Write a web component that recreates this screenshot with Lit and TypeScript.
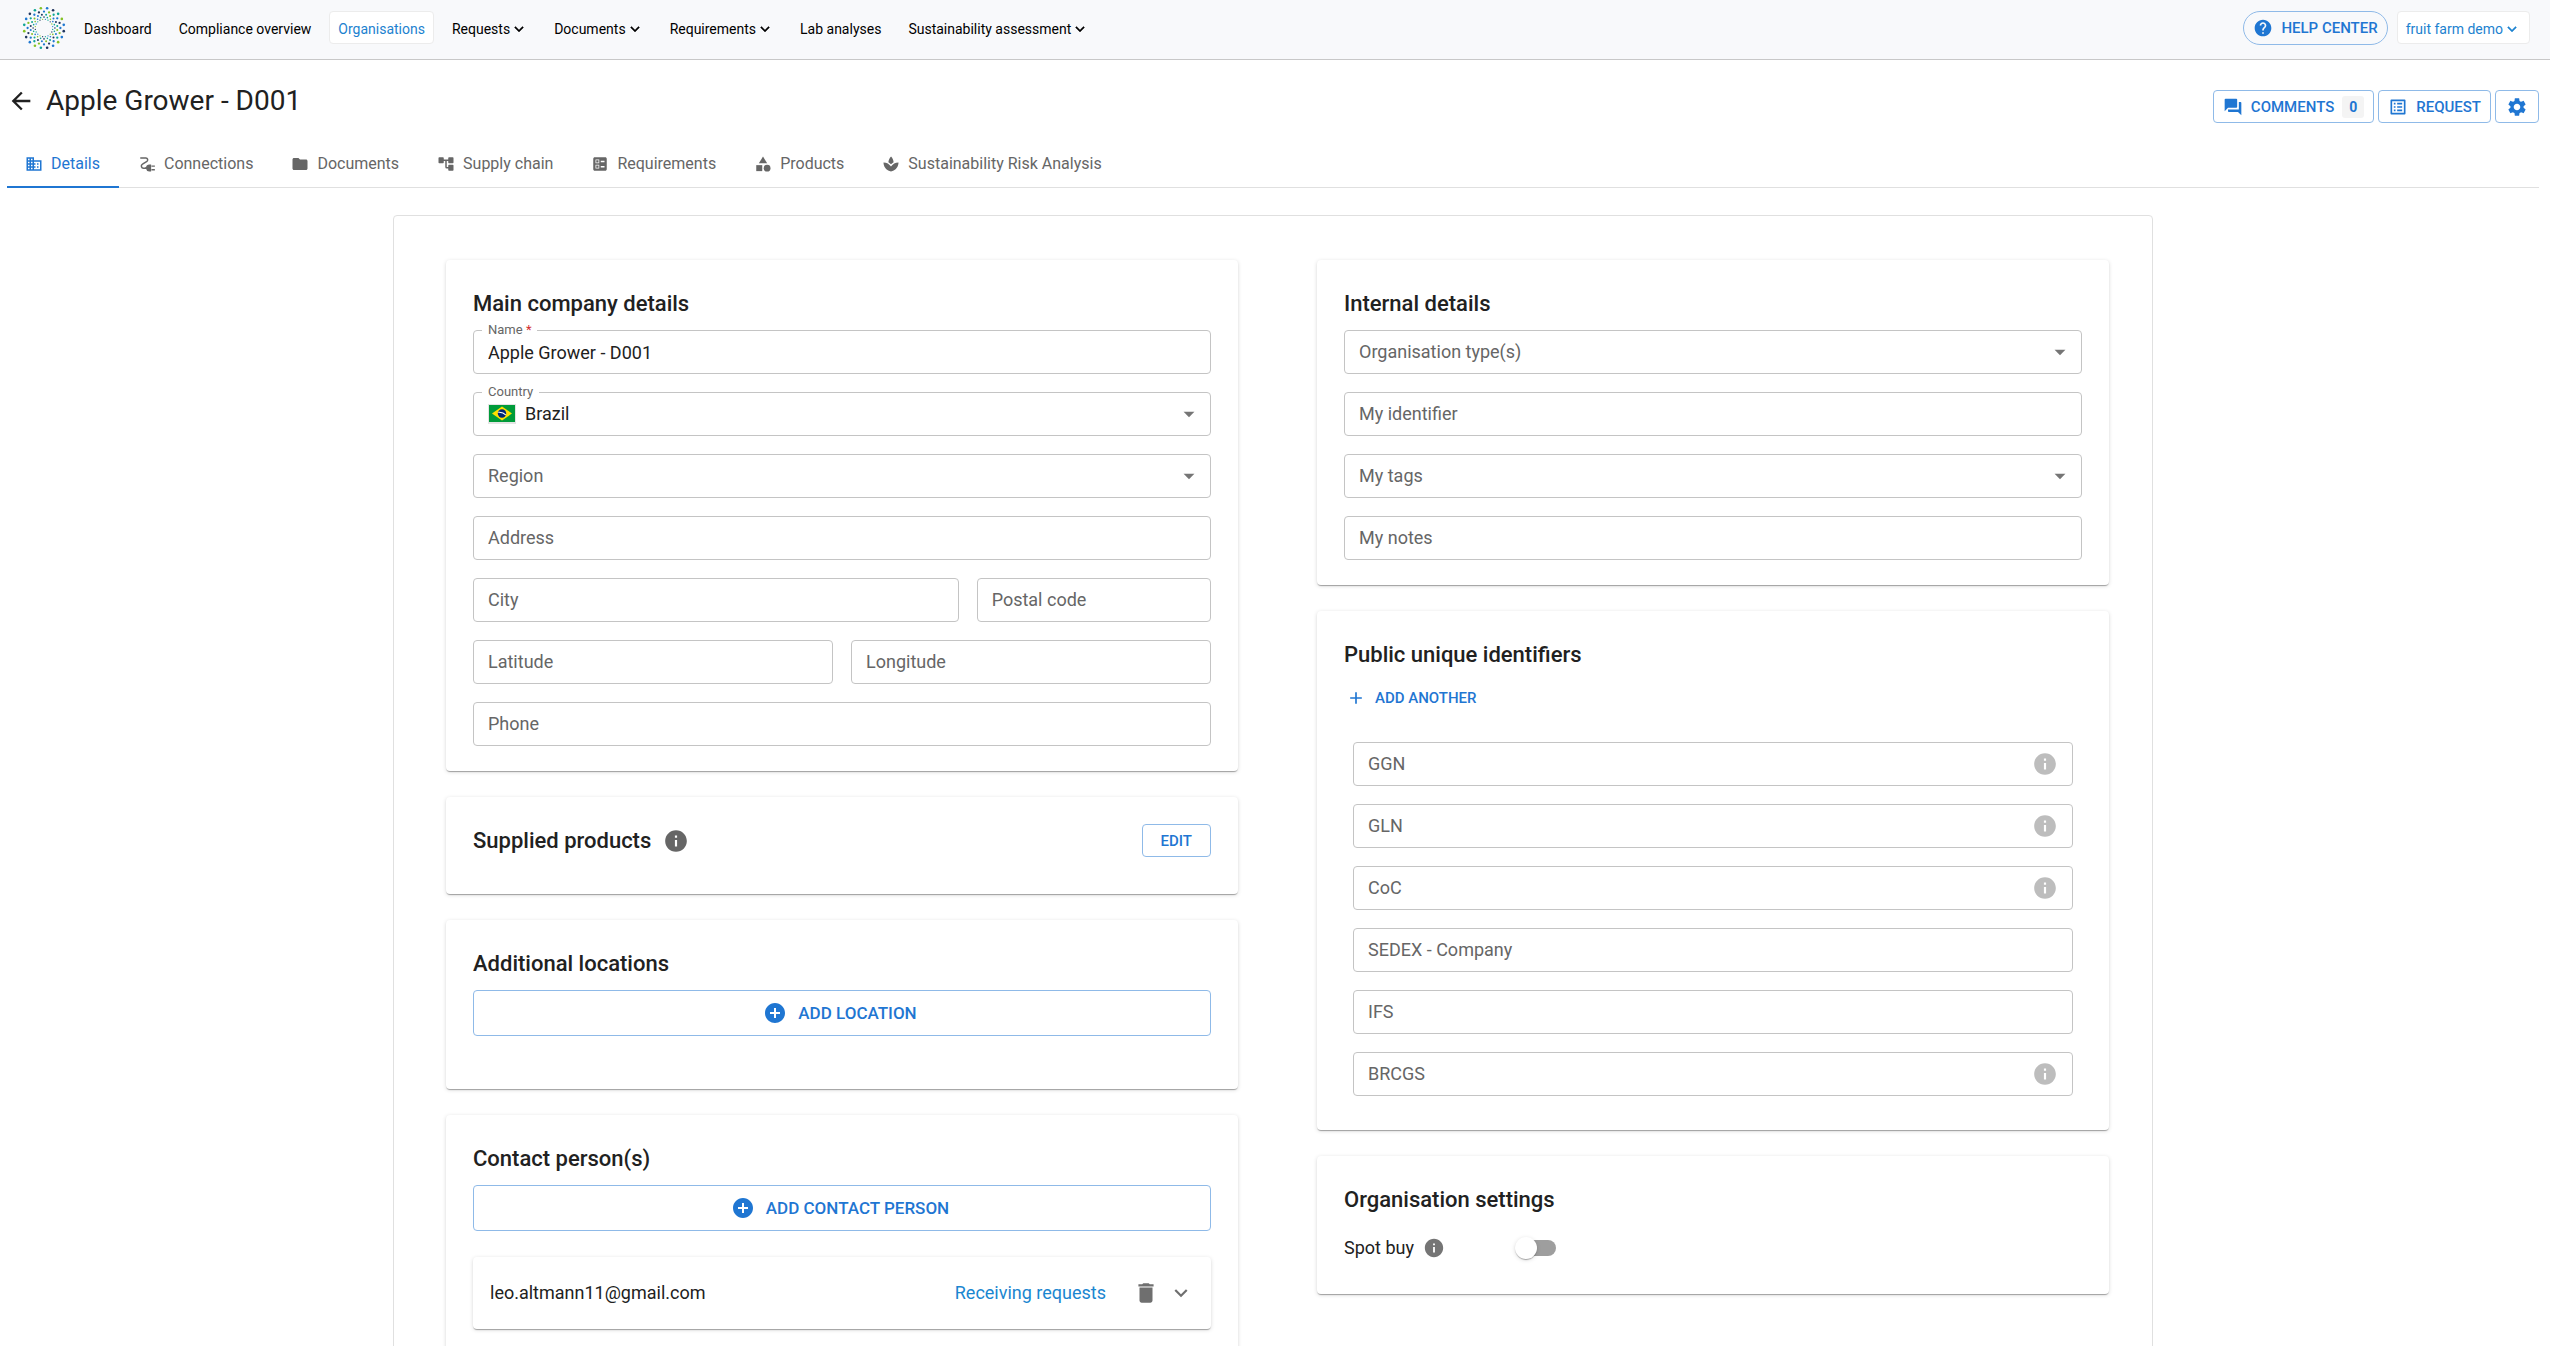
import { LitElement, html, svg, css, nothing } from "lit";
import type { TemplateResult, SVGTemplateResult } from "lit";
import { customElement } from "lit/decorators.js";
import { classMap } from "lit/directives/class-map.js";

const ICONS: Record<string, SVGTemplateResult> = {
  back: svg`<path d="M20 11H7.83l5.59-5.59L12 4l-8 8 8 8 1.41-1.41L7.83 13H20z"/>`,
  chevron: svg`<path d="M7.41 8.59 12 13.17l4.59-4.58L18 10l-6 6-6-6z"/>`,
  caret: svg`<path d="M7.41 8.59 12 13.17l4.59-4.58L18 10l-6 6-6-6z" stroke="currentColor" stroke-width=".5"/>`,
  help: svg`<path d="M12 2C6.48 2 2 6.48 2 12s4.48 10 10 10 10-4.48 10-10S17.52 2 12 2zm1 17h-2v-2h2v2zm2.07-7.75l-.9.92C13.45 12.9 13 13.5 13 15h-2v-.5c0-1.1.45-2.1 1.17-2.83l1.24-1.26c.37-.36.59-.86.59-1.41 0-1.1-.9-2-2-2s-2 .9-2 2H8c0-2.21 1.79-4 4-4s4 1.79 4 4c0 .88-.36 1.68-.93 2.25z"/>`,
  comments: svg`<path d="M21 6h-2v9H6v2c0 .55.45 1 1 1h11l4 4V7c0-.55-.45-1-1-1zm-4 6V3c0-.55-.45-1-1-1H3c-.55 0-1 .45-1 1v14l4-4h10c.55 0 1-.45 1-1z"/>`,
  list: svg`<path d="M19 5v14H5V5h14m1.1-2H3.9c-.5 0-.9.4-.9.9v16.2c0 .4.4.9.9.9h16.2c.4 0 .9-.5.9-.9V3.9c0-.5-.5-.9-.9-.9zM11 7h6v2h-6V7zm0 4h6v2h-6v-2zm0 4h6v2h-6zM7 7h2v2H7zm0 4h2v2H7zm0 4h2v2H7z"/>`,
  settings: svg`<path d="M19.14 12.94c.04-.3.06-.61.06-.94 0-.32-.02-.64-.07-.94l2.03-1.58c.18-.14.23-.41.12-.61l-1.92-3.32c-.12-.22-.37-.29-.59-.22l-2.39.96c-.5-.38-1.03-.7-1.62-.94l-.36-2.54c-.04-.24-.24-.41-.48-.41h-3.84c-.24 0-.43.17-.47.41l-.36 2.54c-.59.24-1.13.57-1.62.94l-2.39-.96c-.22-.08-.47 0-.59.22L2.74 8.87c-.12.21-.08.47.12.61l2.03 1.58c-.05.3-.09.63-.09.94s.02.64.07.94l-2.03 1.58c-.18.14-.23.41-.12.61l1.92 3.32c.12.22.37.29.59.22l2.39-.96c.5.38 1.03.7 1.62.94l.36 2.54c.05.24.24.41.48.41h3.84c.24 0 .44-.17.47-.41l.36-2.54c.59-.24 1.13-.56 1.62-.94l2.39.96c.22.08.47 0 .59-.22l1.92-3.32c.12-.22.07-.47-.12-.61l-2.01-1.58zM12 15.6c-1.98 0-3.6-1.62-3.6-3.6s1.62-3.6 3.6-3.6 3.6 1.62 3.6 3.6-1.62 3.6-3.6 3.6z"/>`,
  business: svg`<path d="M12 7V3H2v18h20V7H12zM6 19H4v-2h2v2zm0-4H4v-2h2v2zm0-4H4V9h2v2zm0-4H4V5h2v2zm4 12H8v-2h2v2zm0-4H8v-2h2v2zm0-4H8V9h2v2zm0-4H8V5h2v2zm10 12h-8v-2h2v-2h-2v-2h2v-2h-2V9h8v10zm-2-8h-2v2h2v-2zm0 4h-2v2h2v-2z"/>`,
  plug: svg`<path d="M3 4h7.500a2.500 2.500 0 0 1 1.400 4.500L6 12.200a3 3 0 0 0 1.800 5.600H11" fill="none" stroke="currentColor" stroke-width="2"/><path d="M17.500 12.500v9.500H15a4.500 4.500 0 0 1-4.300-3.700H9.500v-2.100h1.200A4.500 4.500 0 0 1 15 12.500zM18 14h4.500v1.800H18zM18 18.700h4.500v1.800H18z"/>`,
  folder: svg`<path d="M10 4H4c-1.100 0-1.990.9-1.990 2L2 18c0 1.100.9 2 2 2h16c1.100 0 2-.9 2-2V8c0-1.100-.9-2-2-2h-8l-2-2z"/>`,
  tree: svg`<path d="M3 3h5a1 1 0 0 1 1 1v2h6V4a1 1 0 0 1 1-1h5a1 1 0 0 1 1 1v6a1 1 0 0 1-1 1h-5a1 1 0 0 1-1-1V8h-2v8h2v-2a1 1 0 0 1 1-1h5a1 1 0 0 1 1 1v6a1 1 0 0 1-1 1h-5a1 1 0 0 1-1-1v-2h-2a2 2 0 0 1-2-2V8H9v2a1 1 0 0 1-1 1H3a1 1 0 0 1-1-1V4a1 1 0 0 1 1-1z"/>`,
  ballot: svg`<path d="M13 9.500h5v-2h-5v2zm0 7h5v-2h-5v2zm6 4.500H5c-1.100 0-2-.9-2-2V5c0-1.100.9-2 2-2h14c1.100 0 2 .9 2 2v14c0 1.100-.9 2-2 2zM6 11h5V6H6v5zm1-4h3v3H7V7zM6 18h5v-5H6v5zm1-4h3v3H7v-3z"/>`,
  category: svg`<path d="M12 2l-5.500 9h11z"/><circle cx="17.500" cy="17.500" r="4.500"/><path d="M3 13.500h8v8H3z"/>`,
  spa: svg`<path d="M15.490 9.630c-.18-2.790-1.310-5.510-3.430-7.630-2.140 2.140-3.320 4.860-3.550 7.630 1.280.68 2.460 1.560 3.490 2.630 1.030-1.060 2.210-1.940 3.490-2.630zM12 15.450C9.850 12.170 6.180 10 2 10c0 5.320 3.360 9.820 8.030 11.490.63.23 1.290.4 1.970.51.68-.12 1.330-.29 1.970-.51C18.640 19.820 22 15.320 22 10c-4.180 0-7.850 2.170-10 5.450z"/>`,
  info: svg`<path d="M12 2C6.48 2 2 6.48 2 12s4.480 10 10 10 10-4.480 10-10S17.520 2 12 2zm1 15h-2v-6h2v6zm0-8h-2V7h2v2z"/>`,
  addCircle: svg`<path d="M12 2C6.480 2 2 6.480 2 12s4.480 10 10 10 10-4.480 10-10S17.520 2 12 2zm5 11h-4v4h-2v-4H7v-2h4V7h2v4h4v2z"/>`,
  add: svg`<path d="M19 13h-6v6h-2v-6H5v-2h6V5h2v6h6v2z"/>`,
  trash: svg`<path d="M6 19c0 1.100.9 2 2 2h8c1.100 0 2-.9 2-2V7H6v12zM19 4h-3.500l-1-1h-5l-1 1H5v2h14V4z"/>`,
  dropdown: svg`<path d="M7 10l5 5 5-5z"/>`,
};

const icon = (name: string, size: string) =>
  html`<svg class="icon ${size}" viewBox="0 0 24 24" aria-hidden="true">${ICONS[name]}</svg>`;

const NAV = [
  { label: "Dashboard" },
  { label: "Compliance overview" },
  { label: "Organisations", active: true },
  { label: "Requests", menu: true },
  { label: "Documents", menu: true },
  { label: "Requirements", menu: true },
  { label: "Lab analyses" },
  { label: "Sustainability assessment", menu: true },
];

const TABS = [
  { label: "Details", icon: "business", active: true },
  { label: "Connections", icon: "plug" },
  { label: "Documents", icon: "folder" },
  { label: "Supply chain", icon: "tree" },
  { label: "Requirements", icon: "ballot" },
  { label: "Products", icon: "category" },
  { label: "Sustainability Risk Analysis", icon: "spa" },
];

interface Field {
  id: string;
  label: string;
  kind?: "text" | "select";
  value?: string;
  required?: boolean;
  flag?: boolean;
  info?: boolean;
}

const ADDRESS: Field[][] = [
  [{ id: "name", label: "Name", value: "Apple Grower - D001", required: true }],
  [{ id: "country", label: "Country", value: "Brazil", kind: "select", flag: true }],
  [{ id: "region", label: "Region", kind: "select" }],
  [{ id: "address", label: "Address" }],
  [{ id: "city", label: "City" }, { id: "postal", label: "Postal code" }],
  [{ id: "latitude", label: "Latitude" }, { id: "longitude", label: "Longitude" }],
  [{ id: "phone", label: "Phone" }],
];

const INTERNAL: Field[] = [
  { id: "types", label: "Organisation type(s)", kind: "select" },
  { id: "identifier", label: "My identifier" },
  { id: "tags", label: "My tags", kind: "select" },
  { id: "notes", label: "My notes" },
];

const IDENTIFIERS: Field[] = [
  { id: "ggn", label: "GGN", info: true },
  { id: "gln", label: "GLN", info: true },
  { id: "coc", label: "CoC", info: true },
  { id: "sedex", label: "SEDEX - Company" },
  { id: "ifs", label: "IFS" },
  { id: "brcgs", label: "BRCGS", info: true },
];

const G = "#84c225";
const B = "#1f78d1";
const N = "#20375f";
const T = "#0fa695";
const RINGS = [
  { r: 20, dot: 1.3, start: 9, colors: [B, N, T, G, B, N, B, G, B, N, T, G, B, N, G, T, B, N, T, G] },
  { r: 16.4, dot: 1.15, start: 0, colors: [B, G, T, B, N] },
  { r: 13.4, dot: 1, start: 9, colors: [T, G, B, N] },
  { r: 10.9, dot: 0.8, start: 0, colors: [N, T, G, B, T] },
  { r: 8.8, dot: 0.65, start: 9, colors: [B, T, N, G] },
];

const logo = () => html`<svg class="logo" viewBox="-22 -22 44 44" role="img" aria-label="Home">
  ${RINGS.map((ring) =>
    Array.from({ length: 20 }, (_, i) => {
      const a = ((ring.start + i * 18) * Math.PI) / 180;
      return svg`<circle cx=${(Math.sin(a) * ring.r).toFixed(2)} cy=${(-Math.cos(a) * ring.r).toFixed(2)}
        r=${ring.dot} fill=${ring.colors[i % ring.colors.length]} />`;
    })
  )}
</svg>`;

const flag = () => html`<svg class="flag" viewBox="0 0 28 20" aria-hidden="true">
  <rect width="28" height="20" fill="#e4e4e4" />
  <rect x="1" y="1" width="26" height="17" fill="#009b3a" />
  <path d="M14 2.500 24 9.500 14 16.500 4 9.500z" fill="#fedf00" />
  <circle cx="14" cy="9.500" r="4.200" fill="#002776" />
  <path d="M10.200 8.300c3-.4 5.600.5 7.500 2.600" fill="none" stroke="#fff" stroke-width="1.100" />
</svg>`;

@customElement("app-root")
export class AppRoot extends LitElement {
  static styles = css`
    :host {
      display: block;
      min-height: 100vh;
      background: #fff;
      color: #212121;
      font: 400 18px/26px Roboto, "Liberation Sans", sans-serif;
      --blue: #1f76d2;
      --blue-line: #8fbae8;
      --line: #e0e0e0;
      --field-line: #c4c4c4;
      --muted: #666;
      --lift: 0 2px 1px -1px rgba(0, 0, 0, 0.2), 0 1px 1px rgba(0, 0, 0, 0.14), 0 1px 4px rgba(0, 0, 0, 0.14);
    }
    * { box-sizing: border-box; }
    button, input, select { font: inherit; color: inherit; margin: 0; }
    button { cursor: pointer; background: none; border: 0; padding: 0; }
    a { color: inherit; text-decoration: none; }
    h1, h2 { margin: 0; }
    .icon { display: block; flex: none; fill: currentColor; }
    .s18 { width: 18px; height: 18px; }
    .s20 { width: 20px; height: 20px; }
    .s22 { width: 22px; height: 22px; }
    .s24 { width: 24px; height: 24px; }
    .s26 { width: 26px; height: 26px; }
    .s28 { width: 28px; height: 28px; }

    .bar {
      display: flex;
      align-items: center;
      justify-content: space-between;
      height: 60px;
      padding: 0 20px 4px 22px;
      background: #f8f9fb;
      border-bottom: 1px solid #c8c8c8;
    }
    .menu { display: flex; align-items: center; gap: 9px; }
    .logo { display: block; width: 44px; height: 44px; }
    .link {
      display: flex;
      align-items: center;
      height: 33px;
      padding: 2px 8px 0;
      border: 1px solid transparent;
      border-radius: 4px;
      color: #000;
      font-size: 14px;
      line-height: 20px;
      white-space: nowrap;
    }
    .menu button.link { padding-right: 7px; }
    .boxed { background: #fff; border-color: #ececec; color: #1c82cf; }
    .account { display: flex; align-items: center; gap: 9px; }
    .outlined {
      display: flex;
      align-items: center;
      justify-content: center;
      gap: 8px;
      height: 33px;
      padding: 0 9px;
      border: 1px solid var(--blue-line);
      border-radius: 4px;
      color: var(--blue);
      font-size: 15px;
      font-weight: 500;
      line-height: 24px;
      white-space: nowrap;
    }
    .pill { height: 34px; border-radius: 17px; }
    .gear { padding: 0 10px; }

    .page { padding: 0 11px 0 7px; }
    .heading {
      display: flex;
      align-items: flex-start;
      justify-content: space-between;
      padding-top: 24px;
    }
    .crumb { display: flex; align-items: center; gap: 11px; }
    .crumb h1 { font-size: 28px; font-weight: 400; line-height: 34px; }
    .back { display: block; color: #212121; }
    .actions { display: flex; gap: 4px; padding-top: 6px; }
    .count {
      min-width: 22px;
      height: 22px;
      border-radius: 3px;
      background: #f4f4f4;
      font-size: 14px;
      font-weight: 700;
      line-height: 22px;
      text-align: center;
    }
    .tabs { display: flex; margin-top: 17px; border-bottom: 1px solid var(--line); }
    .tab {
      display: flex;
      align-items: center;
      gap: 8px;
      height: 48px;
      margin-bottom: -1px;
      padding: 2px 19px 0;
      border-bottom: 2px solid transparent;
      color: var(--muted);
      font-size: 16px;
      line-height: 20px;
      white-space: nowrap;
    }
    .tab.on { padding-left: 18px; color: var(--blue); border-bottom-color: var(--blue); }

    .sheet {
      display: grid;
      grid-template-columns: minmax(0, 1fr) minmax(0, 1fr);
      gap: 79px;
      max-width: 1760px;
      margin: 27px auto 0;
      padding: 44px 43px 44px 52px;
      border: 1px solid var(--line);
      border-radius: 4px;
    }
    .column { display: flex; flex-direction: column; gap: 26px; }
    .card {
      padding: 29px 27px 25px;
      border-radius: 4px;
      background: #fff;
      box-shadow: var(--lift);
    }
    .card h2 { font-size: 22px; font-weight: 500; line-height: 30px; }
    .fields { display: grid; gap: 18px; padding-top: 11px; }
    .row { display: grid; gap: 18px; }
    .row.pair { grid-template-columns: 1fr 1fr; }
    .row.city { grid-template-columns: 487fr 235fr; }

    .field { display: grid; align-items: center; }
    .field > * { grid-area: 1 / 1; min-width: 0; }
    .control {
      width: 100%;
      height: 44px;
      padding: 0 14px;
      border: 1px solid var(--field-line);
      border-radius: 4px;
      background: transparent;
      appearance: none;
      outline: 0;
    }
    .control:focus { border-color: var(--blue); }
    .flagged .control { padding-left: 51px; }
    .hint { justify-self: start; padding-left: 15px; color: var(--muted); pointer-events: none; }
    .float {
      position: relative;
      justify-self: start;
      align-self: start;
      margin: -8px 0 0 9px;
      padding: 0 6px;
      background: #fff;
      color: var(--muted);
      font-size: 13px;
      line-height: 16px;
    }
    .star { color: #d32f2f; }
    .flag { width: 28px; height: 20px; margin-left: 15px; pointer-events: none; }
    .arrow { justify-self: end; margin-right: 9px; color: #757575; pointer-events: none; }
    .tip { justify-self: end; margin-right: 15px; color: #bdbdbd; }

    .supplied { display: flex; align-items: flex-start; justify-content: space-between; padding-top: 27px; padding-bottom: 36px; }
    .titled { display: flex; align-items: center; gap: 12px; color: var(--muted); }
    .titled h2 { color: #212121; line-height: 34px; }
    .edit { padding: 0 18px; }
    .wide {
      gap: 11px;
      width: 100%;
      height: 46px;
      margin-top: 11px;
      padding: 0 13px 0 9px;
      font-size: 17px;
    }
    .locations { padding-bottom: 53px; }
    .person {
      display: flex;
      align-items: center;
      height: 72px;
      margin-top: 26px;
      padding: 0 17px;
      border-radius: 4px;
      box-shadow: var(--lift);
    }
    .mail { flex: 1; }
    .receiving { color: #1a86d0; margin-right: 27px; }
    .tool { color: #6f6f6f; margin-right: 9px; }
    .tool:last-child { margin-right: 0; }
    .more {
      display: flex;
      align-items: center;
      gap: 9px;
      height: 33px;
      margin-top: 11px;
      padding: 0 2px;
      color: var(--blue);
      font-size: 15px;
      font-weight: 500;
    }
    .ids { padding: 28px 9px 9px; }
    .option { display: flex; align-items: center; gap: 9px; height: 54px; padding-top: 11px; color: #757575; }
    .option label { color: #212121; }
    .switch {
      appearance: none;
      display: grid;
      align-items: center;
      width: 41px;
      height: 22px;
      margin-left: 61px;
      cursor: pointer;
    }
    .switch::before, .switch::after { content: ""; grid-area: 1 / 1; }
    .switch::before { width: 37px; height: 16px; margin-left: 4px; border-radius: 8px; background: #9e9e9e; }
    .switch::after {
      width: 22px;
      height: 22px;
      border-radius: 50%;
      background: #fff;
      box-shadow: var(--lift);
    }
    .switch:checked::after { margin-left: 19px; background: var(--blue); }
  `;

  private field(f: Field): TemplateResult {
    const filled = !!f.value;
    return html`<div class=${classMap({ field: true, flagged: !!f.flag })}>
      ${f.kind === "select"
        ? html`<select class="control" id=${f.id}>
            <option>${f.value ?? ""}</option>
          </select>`
        : html`<input class="control" id=${f.id} type="text" .value=${f.value ?? ""} ?required=${f.required} />`}
      <label class=${filled ? "float" : "hint"} for=${f.id}
        >${f.label}${f.required ? html` <span class="star">*</span>` : nothing}</label
      >
      ${f.flag ? flag() : nothing}
      ${f.kind === "select" ? html`<svg class="icon s26 arrow" viewBox="0 0 24 24" aria-hidden="true">${ICONS.dropdown}</svg>` : nothing}
      ${f.info ? html`<button class="tip" type="button" aria-label="About ${f.label}">${icon("info", "s26")}</button>` : nothing}
    </div>`;
  }

  private bar() {
    return html`<header class="bar">
      <nav class="menu">
        <a class="home" href="#">${logo()}</a>
        ${NAV.map((n) =>
          n.menu
            ? html`<button class="link" type="button">${n.label}${icon("caret", "s18")}</button>`
            : html`<a class=${classMap({ link: true, boxed: !!n.active })} href="#">${n.label}</a>`
        )}
      </nav>
      <div class="account">
        <button class="outlined pill" type="button">${icon("help", "s20")}HELP CENTER</button>
        <button class="link boxed" type="button">fruit farm demo${icon("caret", "s18")}</button>
      </div>
    </header>`;
  }

  render() {
    return html`
      ${this.bar()}
      <main class="page">
        <div class="heading">
          <div class="crumb">
            <a class="back" href="#" aria-label="Back">${icon("back", "s28")}</a>
            <h1>Apple Grower - D001</h1>
          </div>
          <div class="actions">
            <button class="outlined" type="button">
              ${icon("comments", "s20")}COMMENTS<span class="count">0</span>
            </button>
            <button class="outlined" type="button">${icon("list", "s20")}REQUEST</button>
            <button class="outlined gear" type="button" aria-label="Settings">${icon("settings", "s22")}</button>
          </div>
        </div>
        <nav class="tabs">
          ${TABS.map(
            (t) => html`<a class=${classMap({ tab: true, on: !!t.active })} href="#">${icon(t.icon, "s18")}${t.label}</a>`
          )}
        </nav>
        <div class="sheet">
          <div class="column">
            <section class="card">
              <h2>Main company details</h2>
              <div class="fields">
                ${ADDRESS.map(
                  (row) => html`<div class=${classMap({ row: true, city: row[0].id === "city", pair: row[0].id === "latitude" })}>
                    ${row.map((f) => this.field(f))}
                  </div>`
                )}
              </div>
            </section>
            <section class="card supplied">
              <div class="titled"><h2>Supplied products</h2>${icon("info", "s26")}</div>
              <button class="outlined edit" type="button">EDIT</button>
            </section>
            <section class="card locations">
              <h2>Additional locations</h2>
              <button class="outlined wide" type="button">${icon("addCircle", "s24")}ADD LOCATION</button>
            </section>
            <section class="card">
              <h2>Contact person(s)</h2>
              <button class="outlined wide" type="button">${icon("addCircle", "s24")}ADD CONTACT PERSON</button>
              <div class="person">
                <span class="mail">leo.altmann11@gmail.com</span>
                <span class="receiving">Receiving requests</span>
                <button class="tool" type="button" aria-label="Delete">${icon("trash", "s26")}</button>
                <button class="tool" type="button" aria-label="Expand">${icon("chevron", "s26")}</button>
              </div>
            </section>
          </div>
          <div class="column">
            <section class="card">
              <h2>Internal details</h2>
              <div class="fields">${INTERNAL.map((f) => this.field(f))}</div>
            </section>
            <section class="card">
              <h2>Public unique identifiers</h2>
              <button class="more" type="button">${icon("add", "s20")}ADD ANOTHER</button>
              <div class="fields ids">${IDENTIFIERS.map((f) => this.field(f))}</div>
            </section>
            <section class="card">
              <h2>Organisation settings</h2>
              <div class="option">
                <label for="spot">Spot buy</label>${icon("info", "s22")}
                <input class="switch" id="spot" type="checkbox" role="switch" />
              </div>
            </section>
          </div>
        </div>
      </main>
    `;
  }
}
